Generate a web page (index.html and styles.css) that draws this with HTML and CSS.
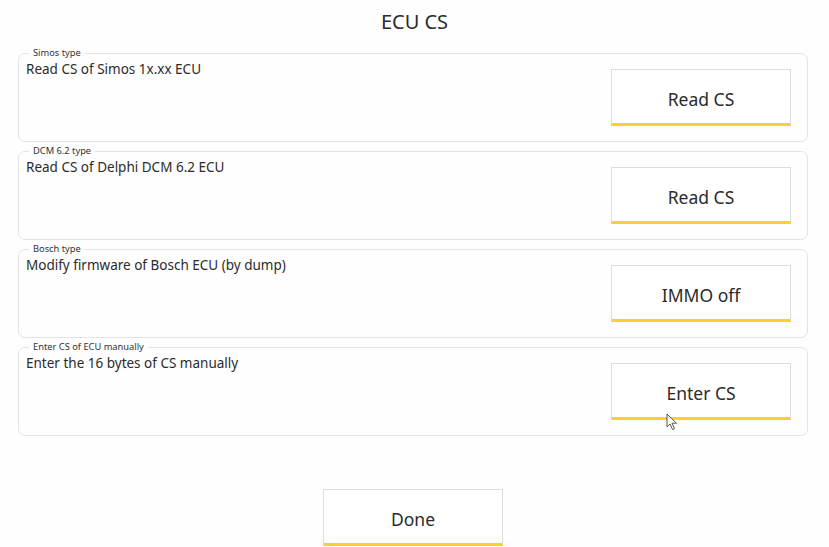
FILE: index.html
```html
<!DOCTYPE html>
<html lang="en">
<head>
    <meta charset="UTF-8">
    <meta name="viewport" content="width=device-width, initial-scale=1.0">
    <title>ECU CS</title>
    <link rel="stylesheet" href="styles.css">
</head>
<body>

    <div class="dialog">
        <h1 class="title">ECU CS</h1>

        <div class="groups">
            <fieldset class="group">
                <legend>Simos type</legend>
                <div class="group-row">
                    <p class="desc">Read CS of Simos 1x.xx ECU</p>
                    <button class="btn">Read CS</button>
                </div>
            </fieldset>

            <fieldset class="group">
                <legend>DCM 6.2 type</legend>
                <div class="group-row">
                    <p class="desc">Read CS of Delphi DCM 6.2 ECU</p>
                    <button class="btn">Read CS</button>
                </div>
            </fieldset>

            <fieldset class="group">
                <legend>Bosch type</legend>
                <div class="group-row">
                    <p class="desc">Modify firmware of Bosch ECU (by dump)</p>
                    <button class="btn">IMMO off</button>
                </div>
            </fieldset>

            <fieldset class="group">
                <legend>Enter CS of ECU manually</legend>
                <div class="group-row">
                    <p class="desc">Enter the 16 bytes of CS manually</p>
                    <button class="btn">Enter CS</button>
                </div>
            </fieldset>
        </div>

        <div class="footer">
            <button class="btn">Done</button>
        </div>
    </div>

    <!-- mouse pointer -->
    <svg class="cursor" width="12" height="18" viewBox="0 0 12 18">
        <path d="M1 1 L1 14 L4 11 L6.5 16.5 L8.5 15.6 L6 10.2 L10.5 10.2 Z" fill="#fff" stroke="#555" stroke-width="1" stroke-linejoin="round"/>
    </svg>

</body>
</html>
```

FILE: styles.css
```css
body {
    margin: 0;
    padding: 0;
    font-family: 'Noto Sans', 'Open Sans', sans-serif;
    color: #2b2b2b;
    background: #fefefe;
    width: 829px;
    height: 547px;
    overflow: hidden;
    position: relative;
}

.dialog {
    display: flex;
    flex-direction: column;
}

.title {
    margin: 0;
    padding-top: 8px;
    height: 48px;
    box-sizing: border-box;
    font-size: 20px;
    font-weight: normal;
    line-height: 28px;
    text-align: center;
}

/* Group boxes */
.groups {
    display: flex;
    flex-direction: column;
    gap: 4px;
    padding: 0 21px 0 18px;
}

.group {
    margin: 0;
    padding: 3px 16px 15px 7px;
    border: 1.5px solid #e4e4e4;
    border-radius: 7px;
}

.group legend {
    margin-left: 3px;
    padding: 0 4px;
    font-size: 9.3px;
    line-height: 10px;
    color: #333;
}

.group-row {
    display: flex;
    justify-content: space-between;
    align-items: flex-start;
}

.desc {
    margin: 0;
    font-size: 13.5px;
    line-height: 16px;
}

.group .btn {
    margin-top: 8px;
}

/* Buttons with yellow underline */
.btn {
    width: 180px;
    height: 57px;
    box-sizing: border-box;
    background: #fff;
    border: 1px solid #dcdcdc;
    border-bottom: 3px solid #f7d22c;
    border-radius: 0;
    font-family: inherit;
    font-size: 17.5px;
    color: #2b2b2b;
    padding: 4px 0 0 0;
    cursor: pointer;
}

.footer {
    display: flex;
    justify-content: center;
    padding: 53px 21px 0 18px;
}

.cursor {
    position: absolute;
    left: 666px;
    top: 413px;
}
```
